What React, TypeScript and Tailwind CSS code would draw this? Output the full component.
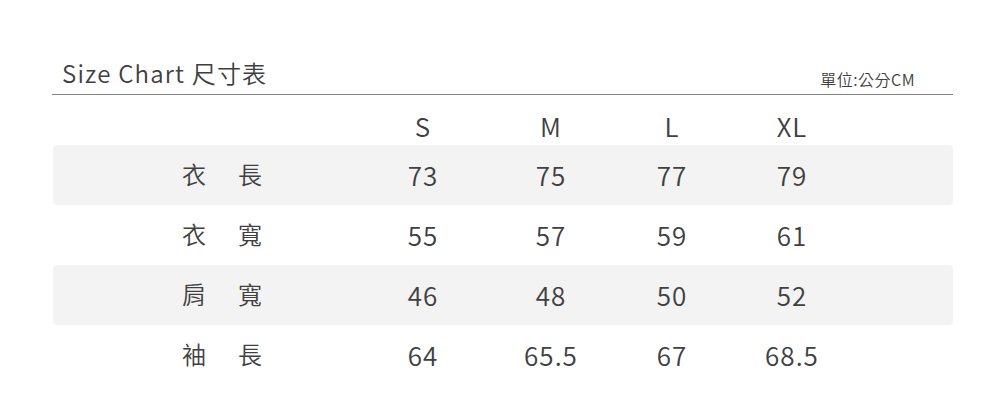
import React from "react";

const font = { fontFamily: '"Noto Sans CJK TC", "Noto Sans", sans-serif' };

const rows = [
  { label: ["衣", "長"], vals: ["73", "75", "77", "79"], band: true },
  { label: ["衣", "寬"], vals: ["55", "57", "59", "61"], band: false },
  { label: ["肩", "寬"], vals: ["46", "48", "50", "52"], band: true },
  { label: ["袖", "長"], vals: ["64", "65.5", "67", "68.5"], band: false },
];

function Cells({ vals }: { vals: string[] }) {
  return (
    <>
      <div className="w-[120px] text-center">{vals[0]}</div>
      <div className="w-[136px] text-center">{vals[1]}</div>
      <div className="w-[106px] text-center">{vals[2]}</div>
      <div className="w-[134px] text-center">{vals[3]}</div>
    </>
  );
}

export default function App() {
  return (
    <div className="w-[1005px] h-[420px] bg-white text-[#404040] font-[350]" style={font}>
      <div className="mx-[52px] pt-[55px]">
        <div className="flex items-end justify-between border-b border-[#808080] pb-[3px]">
          <div className="pl-[10px] text-[24px] tracking-[1.2px] leading-[36px]">Size Chart 尺寸表</div>
          <div className="pr-[38px] pb-[2px] text-[16px] leading-[20px] tracking-[0.5px]">單位:公分CM</div>
        </div>
        <div className="pl-px">
          <div className="flex h-[50px] pt-[16px] text-[26px] leading-[30px] tracking-[1px]">
            <div className="w-[310px]" />
            <Cells vals={["S", "M", "L", "XL"]} />
          </div>
          {rows.map((r, i) => (
            <div
              key={i}
              className={`flex items-center h-[60px] text-[26px] tracking-[1px] rounded-[4px] ${r.band ? "bg-[#f3f3f3]" : ""}`}
            >
              <div className="w-[310px] pl-[129px] pb-[2px] flex gap-[32px] text-[24px] tracking-normal">
                <span>{r.label[0]}</span>
                <span>{r.label[1]}</span>
              </div>
              <div className="flex pb-[1px]">
                <Cells vals={r.vals} />
              </div>
            </div>
          ))}
        </div>
      </div>
    </div>
  );
}
